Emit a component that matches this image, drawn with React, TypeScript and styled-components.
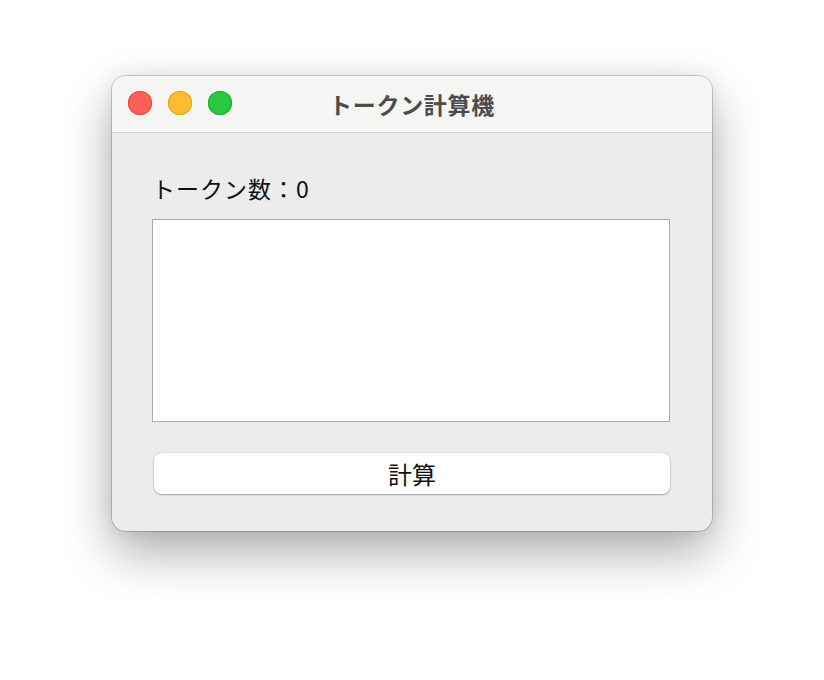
import React from "react";
import styled, { createGlobalStyle } from "styled-components";

const Global = createGlobalStyle`
  html, body { margin: 0; padding: 0; background: #ffffff; }
  body { font-family: "Noto Sans CJK JP", "Noto Sans", sans-serif; }
`;

const Page = styled.div`
  display: flex;
  justify-content: center;
  padding-top: 76px;
  height: 680px;
  box-sizing: border-box;
`;

const Window = styled.div`
  width: 600px;
  height: 455px;
  border-radius: 14px;
  background: #ececec;
  box-shadow: 0 0 0 1px rgba(0,0,0,0.18), 0 22px 50px rgba(0,0,0,0.32), 0 0 20px rgba(0,0,0,0.08);
  overflow: hidden;
  display: flex;
  flex-direction: column;
`;

const TitleBar = styled.div`
  position: relative;
  height: 56px;
  background: #f5f5f4;
  border-bottom: 1px solid #d3d3d3;
  display: flex;
  align-items: center;
  justify-content: center;
  flex-shrink: 0;
`;

const Lights = styled.div`
  position: absolute;
  left: 16px;
  top: 15px;
  display: flex;
  gap: 16px;
`;

const Light = styled.span<{ $fill: string; $edge: string }>`
  width: 24px;
  height: 24px;
  border-radius: 50%;
  background: ${(p) => p.$fill};
  box-shadow: inset 0 0 0 1px ${(p) => p.$edge};
  box-sizing: border-box;
`;

const Title = styled.div`
  font-size: 23px;
  font-weight: 700;
  color: #4c4c4c;
  margin-top: -1px;
  letter-spacing: 0.7px;
`;

const Content = styled.div`
  display: flex;
  flex-direction: column;
  padding: 41px 42px 0 40px;
`;

const Label = styled.div`
  font-size: 23px;
  line-height: 28px;
  color: #111;
  height: 28px;
  margin-bottom: 17px;
  letter-spacing: 1px;
`;

const TextArea = styled.textarea`
  width: 518px;
  height: 203px;
  box-sizing: border-box;
  border: 1px solid #a9a9a9;
  background: #ffffff;
  resize: none;
  outline: none;
  margin: 0;
  padding: 4px;
  display: block;
`;

const Button = styled.button`
  margin: 31px 0 0 2px;
  width: 516px;
  height: 41px;
  border: none;
  border-radius: 8px;
  background: #ffffff;
  box-shadow: 0 0 0 0.5px rgba(0,0,0,0.12), 0 1px 2px rgba(0,0,0,0.28);
  font-family: "Noto Sans CJK JP", "Noto Sans", sans-serif;
  font-size: 24px;
  color: #111;
  display: flex;
  align-items: center;
  justify-content: center;
  padding: 0;
`;

export default function App() {
  return (
    <>
      <Global />
      <Page>
        <Window>
          <TitleBar>
            <Lights>
              <Light $fill="#ff5f57" $edge="#e2463f" />
              <Light $fill="#febc2e" $edge="#e1a116" />
              <Light $fill="#28c840" $edge="#14ae2b" />
            </Lights>
            <Title>トークン計算機</Title>
          </TitleBar>
          <Content>
            <Label>トークン数：0</Label>
            <TextArea />
            <Button>計算</Button>
          </Content>
        </Window>
      </Page>
    </>
  );
}
